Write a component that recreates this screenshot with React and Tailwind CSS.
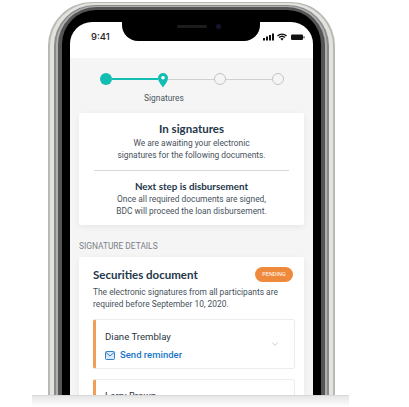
import React from 'react'
import { ChevronDown } from 'lucide-react'

const body = { fontFamily: 'Roboto, sans-serif' }
const heading = { fontFamily: 'Lato, sans-serif' }

function StatusIcons() {
  return (
    <svg width="42" height="8" viewBox="0 0 42 8" fill="#111">
      <rect x="0" y="5" width="2" height="2.500" />
      <rect x="3" y="3.500" width="2" height="4" />
      <rect x="6" y="2" width="2" height="5.500" />
      <rect x="9" y="0.500" width="2" height="7" />
      <path d="M19 7.500 17.300 5.700a2.500 2.500 0 0 1 3.400 0Z" />
      <path d="M15.600 4.100a5 5 0 0 1 6.800 0l-.9 1a3.700 3.700 0 0 0-5 0Z" />
      <path d="M14 2.400a7.300 7.300 0 0 1 10 0l-.9 1a6 6 0 0 0-8.200 0Z" />
      <rect x="28" y="1.500" width="12" height="5.500" rx="1.300" />
      <rect x="40.500" y="3.300" width="1" height="2" rx="0.500" />
    </svg>
  )
}

function MailIcon() {
  return (
    <svg width="10" height="9" viewBox="0 0 10 9" fill="none" className="shrink-0">
      <rect x="0.500" y="0.500" width="9" height="8" rx="1" fill="#dbe9f5" stroke="#1976c8" strokeWidth="0.900" />
      <path d="M1 1.500 5 5l4-3.500" stroke="#1976c8" strokeWidth="0.900" />
    </svg>
  )
}

function Stepper() {
  return (
    <div className="pt-[15px] pl-[30px] pr-[29px]">
      <div className="flex items-center h-3">
        <span className="w-3 h-3 rounded-full bg-[#12bdb2] shrink-0" />
        <span className="w-[46px] h-[2px] bg-[#12bdb2]" />
        <svg width="10" height="15" viewBox="0 0 10 15" className="shrink-0 mt-[3px]">
          <path d="M5 0a5 5 0 0 1 5 5c0 3.500-3.200 6.800-5 9.500C3.200 11.800 0 8.500 0 5a5 5 0 0 1 5-5Z" fill="#12bdb2" />
          <circle cx="5" cy="4.800" r="1.800" fill="#fff" />
        </svg>
        <span className="flex-1 h-px bg-[#cfcfcf]" />
        <span className="w-3 h-3 rounded-full border border-[#c4c4c4] bg-[#f5f5f5] shrink-0" />
        <span className="flex-1 h-px bg-[#cfcfcf]" />
        <span className="w-3 h-3 rounded-full border border-[#c4c4c4] bg-[#f5f5f5] shrink-0" />
      </div>
      <p className="mt-[7px] ml-[14px] w-[100px] text-center text-[8.400px] leading-[12px] text-[#4a5560]" style={body}>Signatures</p>
    </div>
  )
}

function Signer({ name }) {
  return (
    <div className="rounded-[3px] border border-[#ececec] border-l-[3px] border-l-[#ef9f5a] bg-white pl-[9px] pr-[14px] flex items-center justify-between h-[50px] shrink-0">
      <div className="pt-[4px]">
        <p className="text-[9.600px] leading-[14px] text-[#2a3644]" style={body}>{name}</p>
        <div className="mt-[4px] flex items-center gap-[5px]">
          <MailIcon />
          <span className="text-[9.500px] font-medium leading-[14px] text-[#1976c8]" style={body}>Send reminder</span>
        </div>
      </div>
      <ChevronDown className="w-[10px] h-[10px] text-[#a9aeb3]" strokeWidth={1.5} />
    </div>
  )
}

export default function App() {
  return (
    <div className="w-[409px] h-[407px] bg-white overflow-hidden pt-[2px]">
      {/* Phone frame */}
      <div className="ml-[48px] w-[287px] h-[393px] rounded-t-[44px] overflow-hidden bg-[#b8b8b4] px-[2px] pt-[1px]">
        <div className="h-full rounded-t-[43px] bg-[#e2e2de] px-[4px] pt-[2px]">
          <div className="h-full rounded-t-[41px] bg-[#8a8a8a] px-[2px] pt-[1px]">
            <div className="h-full rounded-t-[39px] bg-[#b0b0b0] px-[2px] pt-[1px]">
              <div className="h-full rounded-t-[38px] bg-[#555] px-[4px] pt-[3px]">
                <div className="h-full rounded-t-[34px] bg-black px-[8px] pt-[12px]">
                  {/* Screen */}
                  <div className="relative h-full w-[243px] rounded-t-[22px] overflow-hidden bg-white">
                    <div className="absolute left-[52px] top-0 w-[138px] h-[19px] bg-black rounded-b-[16px]" />
                    <div className="absolute left-[107px] top-[3px] w-[30px] h-[3px] rounded-full bg-[#1c1c1c]" />
                    <div className="absolute left-[146px] top-[2px] w-[5px] h-[5px] rounded-full bg-[#14142e]" />
                    <div className="h-[36px] flex items-center justify-between pl-[21px] pr-[8px] pb-[10px] pt-[4px]">
                      <span className="text-[9.500px] font-medium text-[#222]" style={{ fontFamily: 'Inter, sans-serif' }}>9:41</span>
                      <StatusIcons />
                    </div>
                    <div className="h-full bg-[#f5f5f5]">
                      <Stepper />
                      <div className="mx-[9px] mt-[9px] w-[225px] bg-white rounded-[2px] shadow-[0_2px_6px_rgba(0,0,0,0.06)] text-center pt-[9px] pb-[8px]">
                        <h2 className="text-[11.500px] leading-[14px] font-bold text-[#24364a]" style={heading}>In signatures</h2>
                        <p className="mt-[1px] text-[8.400px] leading-[12px] text-[#47525c]" style={body}>We are awaiting your electronic<br />signatures for the following documents.</p>
                        <div className="mx-[15px] mt-[9px] mb-[8px] h-px bg-[#d6d6d6]" />
                        <h2 className="text-[9.800px] leading-[14px] font-bold text-[#24364a]" style={heading}>Next step is disbursement</h2>
                        <p className="mt-[1px] text-[8.400px] leading-[11.500px] text-[#47525c]" style={body}>Once all required documents are signed,<br />BDC will proceed the loan disbursement.</p>
                      </div>
                      <p className="mx-[9px] mt-[15px] text-[8.400px] leading-[12px] text-[#7a8187]" style={body}>SIGNATURE DETAILS</p>
                      <div className="mx-[9px] mt-[5px] w-[225px] bg-white rounded-[2px] shadow-[0_2px_6px_rgba(0,0,0,0.06)] pl-[14px] pr-[9px] pt-[10px] pb-[20px]">
                        <div className="flex items-center justify-between pr-[2px]">
                          <h2 className="text-[11.500px] leading-[14px] font-bold text-[#24364a]" style={heading}>Securities document</h2>
                          <span className="w-[38px] h-[15px] rounded-full bg-[#ef8a3c] text-white text-[5.500px] flex items-center justify-center" style={body}>PENDING</span>
                        </div>
                        <p className="mt-[4px] whitespace-nowrap text-[8.400px] leading-[12px] text-[#47525c]" style={body}>The electronic signatures from all participants are<br />required before September 10, 2020.</p>
                        <div className="mt-[9px] flex flex-col gap-[10px]">
                          <Signer name="Diane Tremblay" />
                          <div className="rounded-[3px] border border-[#ececec] border-l-[3px] border-l-[#ef9f5a] bg-white pl-[9px] pt-[9px] h-[50px]">
                            <p className="text-[9.600px] leading-[14px] text-[#2a3644]" style={body}>Larry Brown</p>
                          </div>
                        </div>
                      </div>
                    </div>
                  </div>
                </div>
              </div>
            </div>
          </div>
        </div>
      </div>
      {/* Cut-off shadow under the phone */}
      <div className="ml-[32px] w-[317px] h-[12px] border-t border-[#d8d8d8] bg-gradient-to-b from-[#e6e6e6] to-white" />
    </div>
  )
}
